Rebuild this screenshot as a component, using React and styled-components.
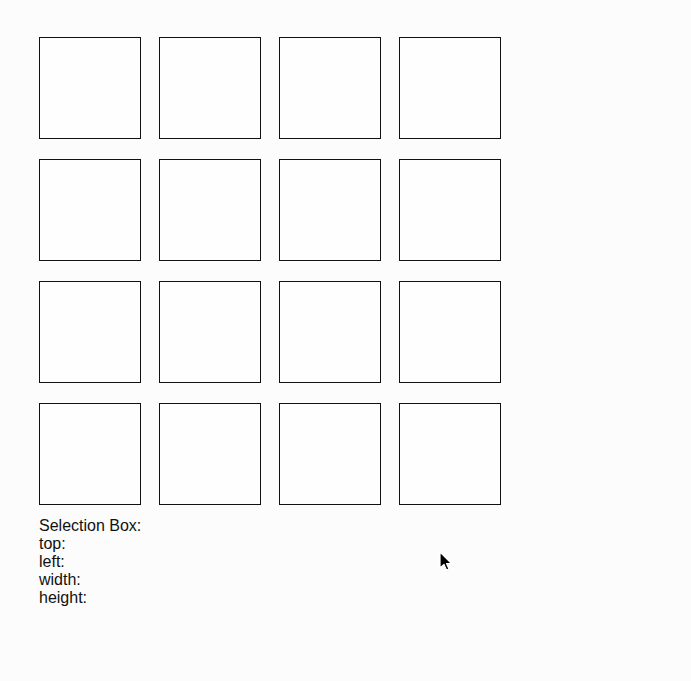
import React from "react";
import styled, { createGlobalStyle } from "styled-components";

const Global = createGlobalStyle`
  html, body { margin: 0; padding: 0; background: #fcfcfc; }
  body { font-family: "Liberation Sans", Arial, sans-serif; }
`;

const Page = styled.div`
  position: relative;
  min-height: 681px;
  padding: 37px 0 0 39px;
  box-sizing: border-box;
`;

const Grid = styled.div`
  display: grid;
  grid-template-columns: repeat(4, 102px);
  grid-auto-rows: 102px;
  column-gap: 18px;
  row-gap: 20px;
`;

const Cell = styled.div`
  box-sizing: border-box;
  border: 1px solid #111;
  background: #fefefe;
`;

const Info = styled.div`
  margin-top: 12px;
  font-size: 16px;
  line-height: 18px;
  color: #111;
`;

const Line = styled.div``;

const Cursor = styled.svg`
  position: absolute;
  left: 438px;
  top: 551px;
`;

export default function App() {
  const cells = Array.from({ length: 16 });
  return (
    <Page>
      <Global />
      <Grid>
        {cells.map((_, i) => (
          <Cell key={i} />
        ))}
      </Grid>
      <Info>
        <Line>Selection Box:</Line>
        <Line>top:</Line>
        <Line>left:</Line>
        <Line>width:</Line>
        <Line>height:</Line>
      </Info>
      <Cursor width="16" height="22" viewBox="0 0 16 22">
        <path d="M2 1 L2 17 L6 13.5 L8.5 19 L11 18 L8.5 12.5 L13.5 12.5 Z" fill="#000" stroke="#fff" strokeWidth="1.2" strokeLinejoin="round" />
      </Cursor>
    </Page>
  );
}
